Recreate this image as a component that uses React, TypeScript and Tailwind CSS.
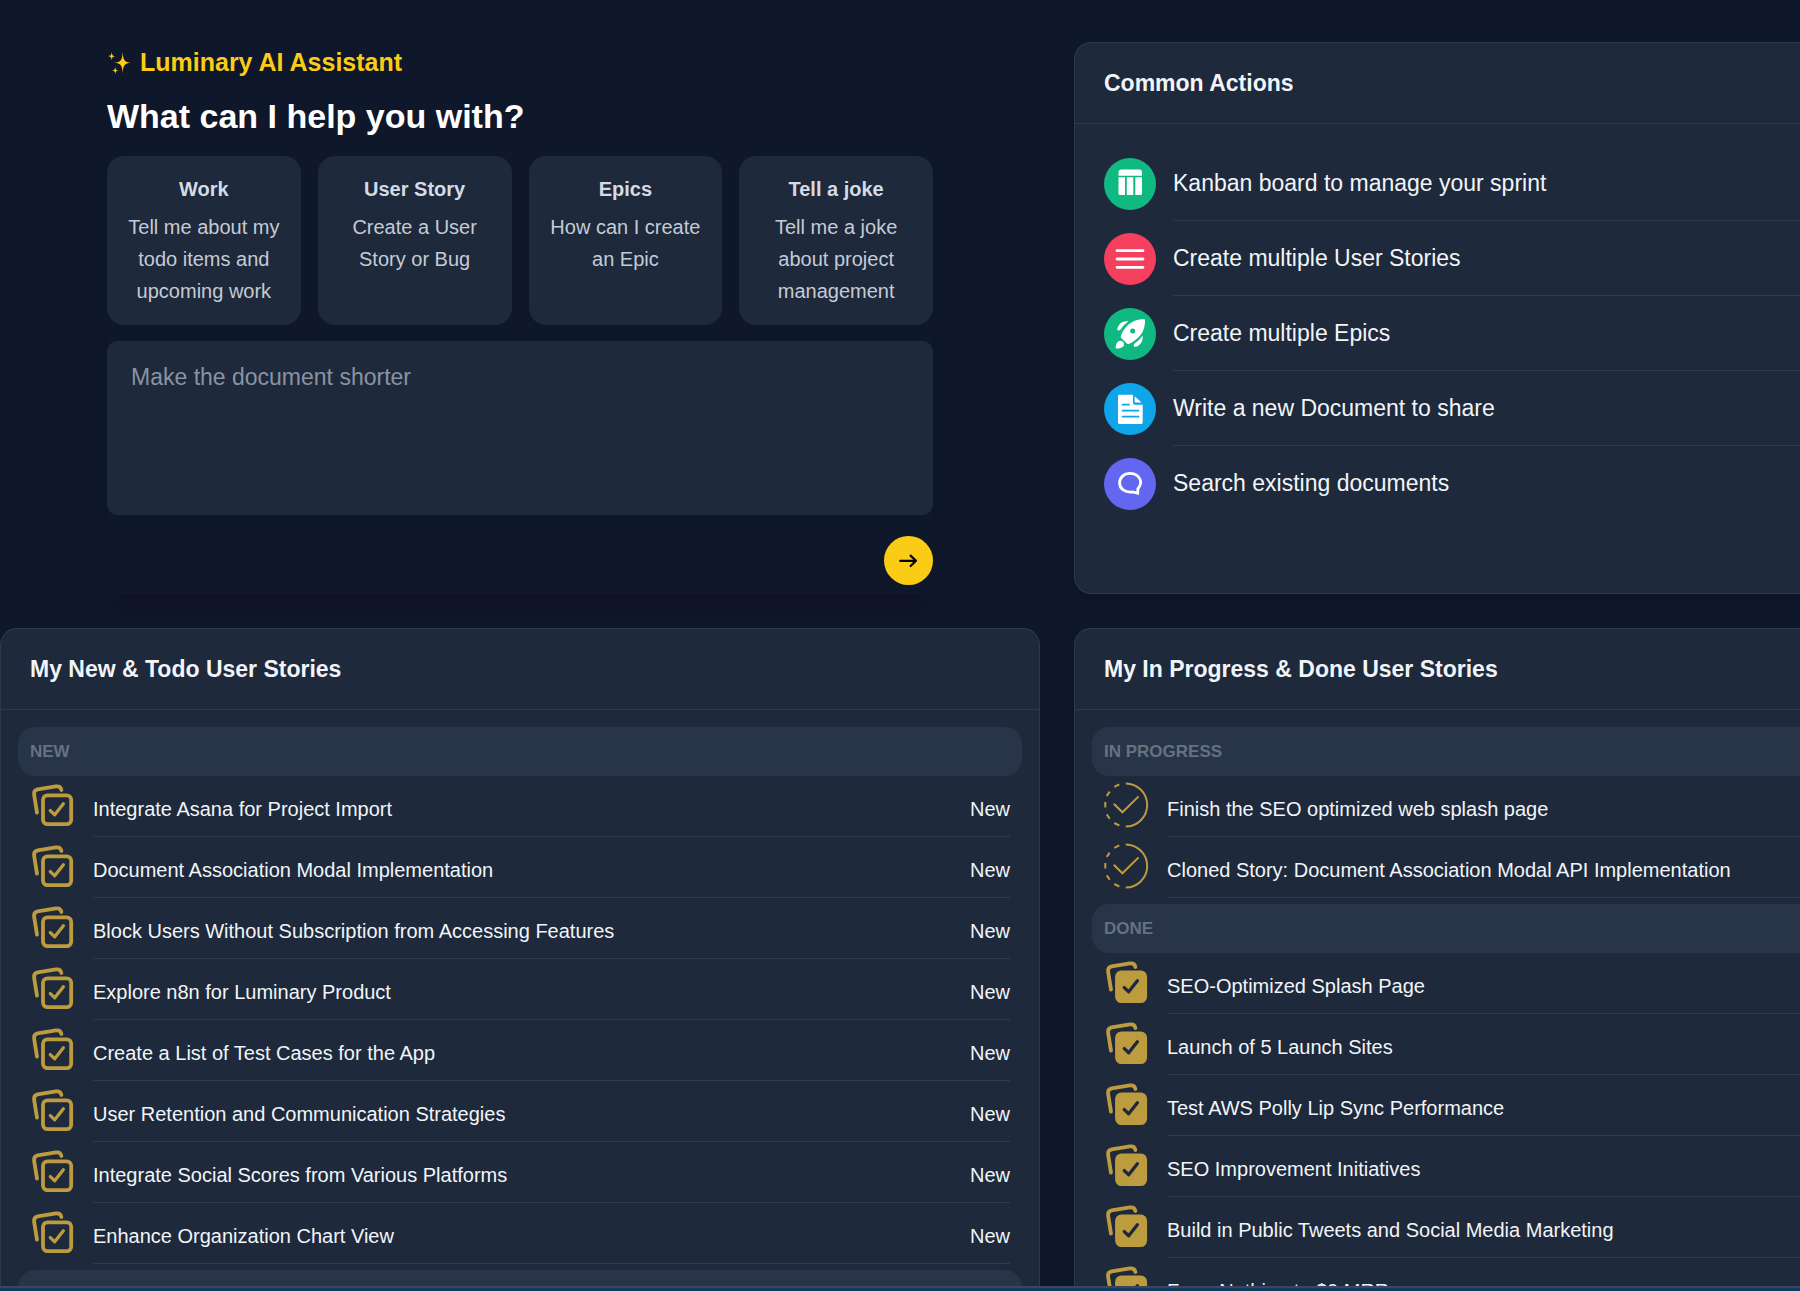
import React from 'react';

interface CardProps {
  title: string;
  className?: string;
  children: React.ReactNode;
}

interface Story {
  name: string;
  status?: string;
}

const suggestions = [
  { title: 'Work', text: 'Tell me about my todo items and upcoming work' },
  { title: 'User Story', text: 'Create a User Story or Bug' },
  { title: 'Epics', text: 'How can I create an Epic' },
  { title: 'Tell a joke', text: 'Tell me a joke about project management' },
];

const newStories: Story[] = [
  { name: 'Integrate Asana for Project Import', status: 'New' },
  { name: 'Document Association Modal Implementation', status: 'New' },
  { name: 'Block Users Without Subscription from Accessing Features', status: 'New' },
  { name: 'Explore n8n for Luminary Product', status: 'New' },
  { name: 'Create a List of Test Cases for the App', status: 'New' },
  { name: 'User Retention and Communication Strategies', status: 'New' },
  { name: 'Integrate Social Scores from Various Platforms', status: 'New' },
  { name: 'Enhance Organization Chart View', status: 'New' },
];

const inProgressStories: Story[] = [
  { name: 'Finish the SEO optimized web splash page' },
  { name: 'Cloned Story: Document Association Modal API Implementation' },
];

const doneStories: Story[] = [
  { name: 'SEO-Optimized Splash Page' },
  { name: 'Launch of 5 Launch Sites' },
  { name: 'Test AWS Polly Lip Sync Performance' },
  { name: 'SEO Improvement Initiatives' },
  { name: 'Build in Public Tweets and Social Media Marketing' },
  { name: 'From Nothing to $0 MRR' },
];

const SparklesIcon = () => (
  <svg className="w-6 h-6" viewBox="0 0 24 24" fill="currentColor" aria-hidden="true">
    <path d="M15.7 0.7C16.2 9.4 17.4 11 24.2 11.7C17.4 12.4 16.2 14 15.7 22.7C15.2 14 14 12.4 7.2 11.7C14 11 15.2 9.4 15.7 0.7Z" />
    <path d="M4.7 0.8C5 4.2 5.6 5 8.2 5.3C5.6 5.6 5 6.4 4.7 9.8C4.4 6.4 3.8 5.6 1.2 5.3C3.8 5 4.4 4.2 4.7 0.8Z" />
    <path d="M8.3 15.5C8.6 18.6 9 19.2 11.5 19.5C9 19.8 8.6 20.4 8.3 23.5C8 20.4 7.4 19.8 5 19.5C7.4 19.2 8 18.6 8.3 15.5Z" />
  </svg>
);

const BoardIcon = () => (
  <svg className="w-[34px] h-[34px]" viewBox="0 0 34 34" fill="currentColor" aria-hidden="true">
    <path d="M5.5 8V5.5A3 3 0 0 1 8.5 2.5H26A3 3 0 0 1 29 5.5V8.8H5.5Z" />
    <path d="M5.5 10.2H12V28H7A1.5 1.5 0 0 1 5.5 26.5ZM13.8 10.2H20.3V28H13.8ZM22.3 10.2H29V26.5A1.5 1.5 0 0 1 27.5 28H22.3Z" />
  </svg>
);

const MenuIcon = () => (
  <svg className="w-[34px] h-[34px]" viewBox="0 0 34 34" fill="none" stroke="currentColor" aria-hidden="true">
    <path strokeLinecap="round" strokeWidth={2.8} d="M4 8.7H30M4 17H30M4 25.3H30" />
  </svg>
);

const RocketIcon = () => (
  <svg className="w-[34px] h-[34px]" viewBox="0 0 34 34" fill="currentColor" aria-hidden="true">
    <path
      fillRule="evenodd"
      d="M31.2 2.2Q32 2.2 32 3C32 9.5 30.6 15.2 26.3 19.4C23.2 22.5 19.6 25.2 16.4 26.8Q15 27.4 13.9 26.4L8.3 20.9Q7.3 19.8 7.9 18.4C9.3 15.2 11.8 11.2 14.9 8.1C19.2 3.8 24.8 2.2 31.2 2.2ZM19.7 11.6A2.5 2.5 0 1 0 19.7 16.6A2.5 2.5 0 1 0 19.7 11.6Z"
    />
    <path d="M15.4 4.4C10.9 4 7.6 5.6 5.8 8.4C4.7 10.2 4 11.8 4.4 12.8C5 14.2 7.1 13.4 8 12C9.9 9.2 12 6.6 15.4 4.4Z" />
    <path d="M29.6 18.4C30.2 22.8 28.6 26.2 25.9 28.2C24.2 29.4 22.3 30.2 21.3 29.7C20 28.9 20.7 27 22.1 26C25 24 27.6 21.8 29.6 18.4Z" />
    <path d="M4.9 24.7C6.4 23.3 8.6 23.5 10 24.8C11.4 26.2 11.4 28.4 10 29.8C8.3 31.2 5.4 31.5 3.2 31.6Q2.5 31.6 2.5 30.8C2.7 28.6 3.3 26.2 4.9 24.7Z" />
  </svg>
);

const DocumentIcon = () => (
  <svg className="w-[34px] h-[34px]" viewBox="0 0 34 34" fill="none" aria-hidden="true">
    <path
      fill="currentColor"
      d="M6.3 2.8H20V10.7A2 2 0 0 0 22 12.7H29.7V30.6A1.3 1.3 0 0 1 28.4 31.9H6.3A1.3 1.3 0 0 1 5 30.6V4.1A1.3 1.3 0 0 1 6.3 2.8Z"
    />
    <path fill="currentColor" d="M21.6 4.2L28.6 10.6H22.6A1 1 0 0 1 21.6 9.6Z" />
    <path stroke="#0ea5e9" strokeWidth={1.7} strokeLinecap="round" d="M9.5 12.7H16M9.5 18.6H25.5M9.5 24.7H25.5" />
  </svg>
);

const ChatIcon = () => (
  <svg className="w-[34px] h-[34px]" viewBox="0 0 34 34" fill="none" stroke="currentColor" aria-hidden="true">
    <path
      strokeWidth={2.8}
      d="M17 6.4C23.3 6.4 27.6 10.4 27.6 15.8C27.6 18.4 26.5 20.2 24.9 21.8L24.7 26.2L19.6 25C11.7 25.9 6.6 21.6 6.6 16C6.6 10.4 10.9 6.4 17 6.4Z"
    />
  </svg>
);

const StackedCheckIcon = ({ filled = false }: { filled?: boolean }) => (
  <svg className="w-[46px] h-[46px] shrink-0 text-[#bd9b3f]" viewBox="0 0 46 46" fill="none" stroke="currentColor" aria-hidden="true">
    <path
      strokeLinecap="round"
      strokeLinejoin="round"
      strokeWidth={3.8}
      d="M7 30.6L4.1 12.6Q3.6 8.2 7.6 7.4L26 4.4Q30.6 3.8 31.4 8"
    />
    <rect x="13" y="13.3" width="28.2" height="28.8" rx="4.5" strokeWidth={3.8} fill={filled ? 'currentColor' : 'none'} />
    <path
      className={filled ? 'text-[#1e293b]' : ''}
      strokeLinecap="round"
      strokeLinejoin="round"
      strokeWidth={3.3}
      d="M20.3 28.6L24.7 32.8L33.4 21.8"
    />
  </svg>
);

const ProgressCheckIcon = () => (
  <svg className="w-[46px] h-[46px] shrink-0 text-[#bd9b3f]" viewBox="0 0 46 46" fill="none" stroke="currentColor" strokeWidth={2} aria-hidden="true">
    <path d="M21.7 1.5A21.5 21.5 0 0 1 21.7 44.5" />
    <path d="M10.3 4.9L15.3 2.4M2.7 13.9L5.7 9.6M1.3 20V25.5M2.8 32.4L5.7 36.7M10.3 41L15.3 43.5" />
    <path d="M9.8 21.8L18.4 30.3L34.6 14.4" />
  </svg>
);

const actions = [
  { label: 'Kanban board to manage your sprint', color: 'bg-[#10b981]', icon: <BoardIcon /> },
  { label: 'Create multiple User Stories', color: 'bg-[#f43f5e]', icon: <MenuIcon /> },
  { label: 'Create multiple Epics', color: 'bg-[#10b981]', icon: <RocketIcon /> },
  { label: 'Write a new Document to share', color: 'bg-[#0ea5e9]', icon: <DocumentIcon /> },
  { label: 'Search existing documents', color: 'bg-[#6366f1]', icon: <ChatIcon /> },
];

const Card: React.FC<CardProps> = ({ title, className = '', children }) => (
  <section className={`flex flex-col min-w-0 bg-[#1e293b] border-[#2d3a4e] shadow-lg overflow-hidden ${className}`}>
    <header className="flex items-center h-[81px] shrink-0 px-[29px] border-b border-[#2d3a4e]">
      <h2 className="text-[23px] leading-8 font-bold text-[#f1f5f9]">{title}</h2>
    </header>
    {children}
  </section>
);

const SectionLabel = ({ className, children }: { className: string; children: React.ReactNode }) => (
  <h3 className={`flex items-center h-[49px] px-3 bg-[#283548] text-[17px] font-bold text-[#677181] uppercase ${className}`}>
    {children}
  </h3>
);

const StoryList = ({ className, stories, icon }: { className: string; stories: Story[]; icon: React.ReactNode }) => (
  <ul className={`mb-[6px] ${className}`}>
    {stories.map((story) => (
      <li key={story.name} className="flex gap-[17px] h-[61px]">
        <div className="pt-[6px]">{icon}</div>
        <div className="flex flex-1 items-center justify-between pt-[6px] border-b border-[#2f3b4e] text-xl text-[#f1f5f9] whitespace-nowrap">
          <span>{story.name}</span>
          {story.status && <span>{story.status}</span>}
        </div>
      </li>
    ))}
  </ul>
);

const Assistant = () => (
  <section className="px-[107px]">
    <div className="h-full shadow-[0_28px_16px_-14px_rgba(14,14,30,0.4)]">
      <div className="flex items-center gap-[9px] h-[42px] text-[#facc15]">
        <SparklesIcon />
        <p className="text-[25px] font-bold">Luminary AI Assistant</p>
      </div>
      <h1 className="mt-3 mb-5 text-[34px] leading-10 font-bold text-white">What can I help you with?</h1>

      {/* Suggestions */}
      <div className="grid grid-cols-4 gap-[17px]">
        {suggestions.map((item) => (
          <button
            key={item.title}
            type="button"
            className="flex flex-col items-center px-4 pt-[17px] pb-[18px] rounded-[17px] bg-[#1e293b] text-xl leading-8 text-center"
          >
            <span className="font-bold text-[#d5dbe5]">{item.title}</span>
            <span className="mt-[6px] text-[#c5cbd5]">{item.text}</span>
          </button>
        ))}
      </div>

      {/* Prompt */}
      <form onSubmit={(e) => e.preventDefault()}>
        <textarea
          aria-label="Prompt"
          placeholder="Make the document shorter"
          className="block w-full h-[174px] mt-4 px-6 py-5 rounded-[11px] bg-[#1e293b] text-[23px] leading-8 text-white placeholder:text-[#8a93a2] resize-none outline-none"
        />
        <div className="flex justify-end mt-[21px]">
          <button type="submit" aria-label="Send" className="flex items-center justify-center w-[49px] h-[49px] rounded-full bg-[#facc15] text-black">
            <svg className="w-5 h-5" fill="none" stroke="currentColor" viewBox="0 0 20 20" aria-hidden="true">
              <path strokeLinecap="round" strokeLinejoin="round" strokeWidth={2.2} d="M1.2 9.8H17M11.6 4.6L17 9.8L11.6 15" />
            </svg>
          </button>
        </div>
      </form>
    </div>
  </section>
);

const App: React.FC = () => {
  return (
    <div
      className="flex flex-col h-screen overflow-hidden bg-[#0f172a]"
      style={{ fontFamily: '"Liberation Sans", Arial, sans-serif' }}
    >
      <main className="grid flex-1 min-h-0 grid-cols-[1040fr_726fr] grid-rows-[552px_minmax(0,1fr)] gap-[34px] pt-[42px]">
        <Assistant />

        <Card title="Common Actions" className="border-y border-l rounded-l-[17px]">
          <nav className="pt-[22px] pl-[29px]">
            {actions.map((action, index) => (
              <a key={action.label} href="#" className="flex items-stretch gap-[17px] h-[75px]">
                <span className="flex items-center">
                  <span className={`flex items-center justify-center w-[52px] h-[52px] rounded-full text-white ${action.color}`}>
                    {action.icon}
                  </span>
                </span>
                <span
                  className={`flex flex-1 items-center text-[23px] text-[#f1f5f9] ${index < actions.length - 1 ? 'border-b border-[#2f3b4e]' : ''}`}
                >
                  {action.label}
                </span>
              </a>
            ))}
          </nav>
        </Card>

        <Card title="My New & Todo User Stories" className="border-x border-t rounded-t-[17px]">
          <div className="px-[17px] pt-[17px]">
            <SectionLabel className="rounded-[17px]">New</SectionLabel>
            <StoryList className="px-3" stories={newStories} icon={<StackedCheckIcon />} />
            <SectionLabel className="rounded-[17px]">Todo</SectionLabel>
          </div>
        </Card>

        {/* This column runs on to the right edge of the window */}
        <Card title="My In Progress & Done User Stories" className="border-l border-t rounded-tl-[17px]">
          <div className="pl-[17px] pt-[17px]">
            <SectionLabel className="rounded-l-[17px]">In Progress</SectionLabel>
            <StoryList className="pl-3" stories={inProgressStories} icon={<ProgressCheckIcon />} />
            <SectionLabel className="rounded-l-[17px]">Done</SectionLabel>
            <StoryList className="pl-3" stories={doneStories} icon={<StackedCheckIcon filled />} />
          </div>
        </Card>
      </main>
      <footer className="h-[5px] shrink-0 border-t-2 border-[#3a465a] bg-[#12395f]" />
    </div>
  );
};

export default App;
